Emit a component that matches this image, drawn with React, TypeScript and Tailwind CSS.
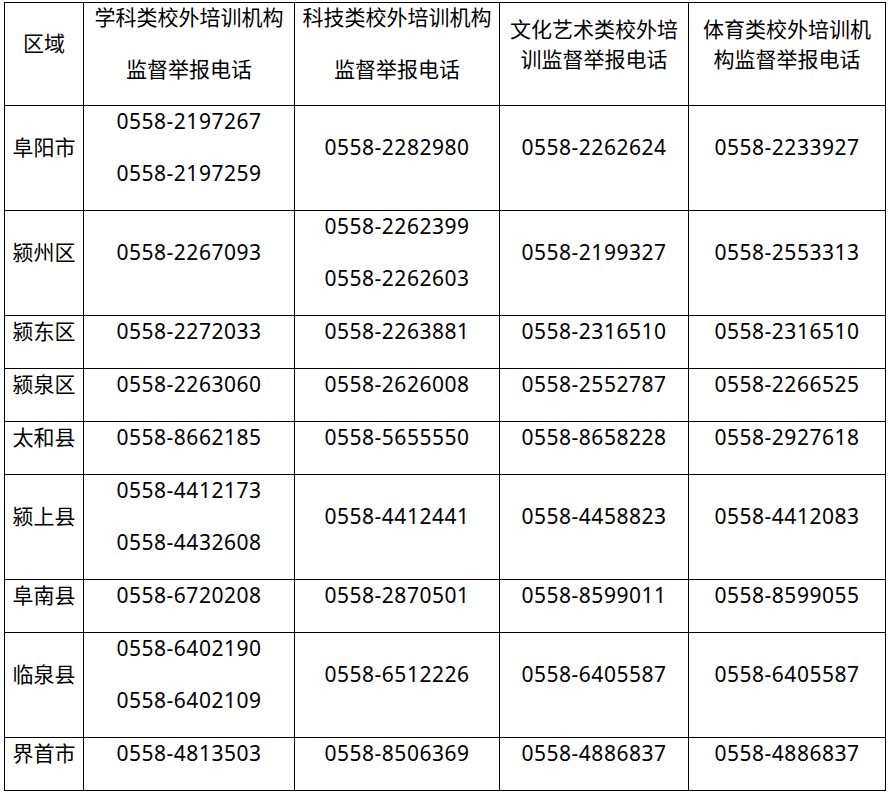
type Row = {
  area: string;
  cells: string[][];
  h: string;
};

const rows: Row[] = [
  { area: "阜阳市", h: "h-[105px]", cells: [["0558-2197267", "0558-2197259"], ["0558-2282980"], ["0558-2262624"], ["0558-2233927"]] },
  { area: "颍州区", h: "h-[105px]", cells: [["0558-2267093"], ["0558-2262399", "0558-2262603"], ["0558-2199327"], ["0558-2553313"]] },
  { area: "颍东区", h: "h-[53px]", cells: [["0558-2272033"], ["0558-2263881"], ["0558-2316510"], ["0558-2316510"]] },
  { area: "颍泉区", h: "h-[53px]", cells: [["0558-2263060"], ["0558-2626008"], ["0558-2552787"], ["0558-2266525"]] },
  { area: "太和县", h: "h-[53px]", cells: [["0558-8662185"], ["0558-5655550"], ["0558-8658228"], ["0558-2927618"]] },
  { area: "颍上县", h: "h-[105px]", cells: [["0558-4412173", "0558-4432608"], ["0558-4412441"], ["0558-4458823"], ["0558-4412083"]] },
  { area: "阜南县", h: "h-[53px]", cells: [["0558-6720208"], ["0558-2870501"], ["0558-8599011"], ["0558-8599055"]] },
  { area: "临泉县", h: "h-[105px]", cells: [["0558-6402190", "0558-6402109"], ["0558-6512226"], ["0558-6405587"], ["0558-6405587"]] },
  { area: "界首市", h: "h-[53px]", cells: [["0558-4813503"], ["0558-8506369"], ["0558-4886837"], ["0558-4886837"]] },
];

function Cell({ h, children }: { h: string; children: React.ReactNode }) {
  return (
    <div className={`${h} flex flex-col items-center justify-center border-r border-b border-black px-[7px] text-center`}>
      {children}
    </div>
  );
}

function P({ children }: { children: React.ReactNode }) {
  return <p className="pb-[21px] leading-[31px]">{children}</p>;
}

export default function App() {
  return (
    <div className="min-h-screen bg-white pt-[2px] pl-[4px] font-['Noto_Sans','Noto_Sans_CJK_SC',sans-serif] text-[21px] text-black">
      <div className="grid w-[882px] grid-cols-[79px_211px_205px_189px_197px] border-t border-l border-black">
        <Cell h="h-[103px]">
          <P>区域</P>
        </Cell>
        <Cell h="h-[103px]">
          <P>学科类校外培训机构</P>
          <P>监督举报电话</P>
        </Cell>
        <Cell h="h-[103px]">
          <P>科技类校外培训机构</P>
          <P>监督举报电话</P>
        </Cell>
        <Cell h="h-[103px]">
          <p className="pt-[2px] pb-[23px] leading-[30px]">
            文化艺术类校外培
            <br />
            训监督举报电话
          </p>
        </Cell>
        <Cell h="h-[103px]">
          <p className="pt-[2px] pb-[23px] leading-[30px]">
            体育类校外培训机
            <br />
            构监督举报电话
          </p>
        </Cell>

        {rows.map((r) => (
          <div key={r.area} className="contents">
            <Cell h={r.h}>
              <P>{r.area}</P>
            </Cell>
            {r.cells.map((c, i) => (
              <Cell key={i} h={r.h}>
                {c.map((n, j) => (
                  <p key={j} className="pb-[21px] leading-[31px] tracking-[0.5px]">
                    {n}
                  </p>
                ))}
              </Cell>
            ))}
          </div>
        ))}
      </div>
    </div>
  );
}
